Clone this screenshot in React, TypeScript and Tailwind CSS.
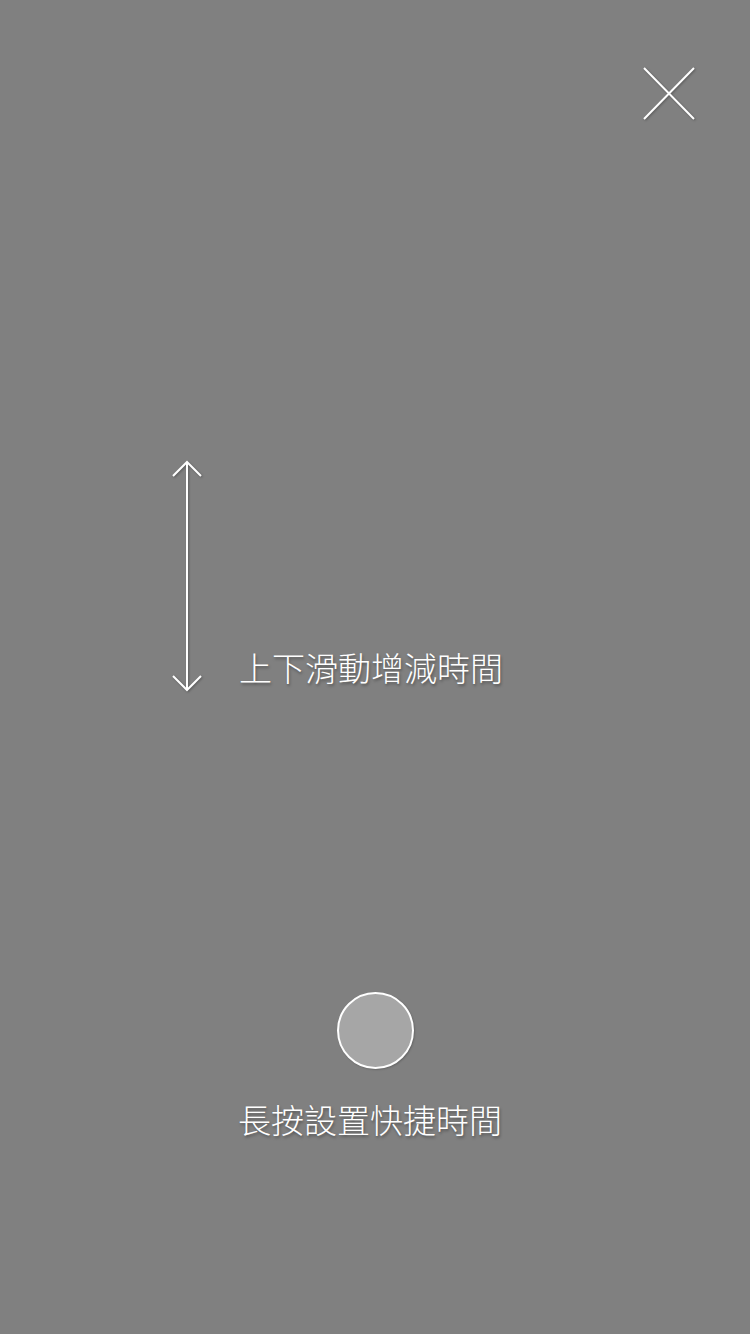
export default function App() {
  return (
    <div className="flex h-[1334px] w-[750px] flex-col bg-[#808080] font-['Noto_Sans_CJK_TC','Noto_Sans_CJK_SC',sans-serif] text-white">
      {/* close */}
      <div className="flex justify-end pr-[55px] pt-[67px]">
        <svg width="52" height="53" viewBox="0 0 52 53" className="drop-shadow-[1px_1px_1px_rgba(0,0,0,0.3)]">
          <path d="M1 1 L51 52 M51 1 L1 52" stroke="#fff" strokeWidth="2" fill="none" />
        </svg>
      </div>

      {/* swipe hint */}
      <div className="mt-[340px] flex items-end pl-[172px]">
        <svg width="30" height="232" viewBox="0 0 30 232" className="drop-shadow-[1px_1px_1px_rgba(0,0,0,0.3)]">
          <path
            d="M15 2 L15 230 M1 16 L15 2 L29 16 M1 216 L15 230 L29 216"
            stroke="#fff"
            strokeWidth="2"
            fill="none"
          />
        </svg>
        <span className="mb-[5px] ml-[37px] text-[33px] font-light leading-[40px] [text-shadow:1px_2px_3px_rgba(0,0,0,0.35)]">
          上下滑動增減時間
        </span>
      </div>

      {/* long press */}
      <div className="mt-[300px] flex flex-col items-center">
        <div className="h-[77px] w-[77px] rounded-full border-2 border-white bg-[#a6a6a6] shadow-[1px_1px_2px_rgba(0,0,0,0.2)]" />
        <span className="mr-[10px] mt-[30px] text-[33px] font-light leading-[40px] [text-shadow:1px_2px_3px_rgba(0,0,0,0.35)]">
          長按設置快捷時間
        </span>
      </div>
    </div>
  )
}
